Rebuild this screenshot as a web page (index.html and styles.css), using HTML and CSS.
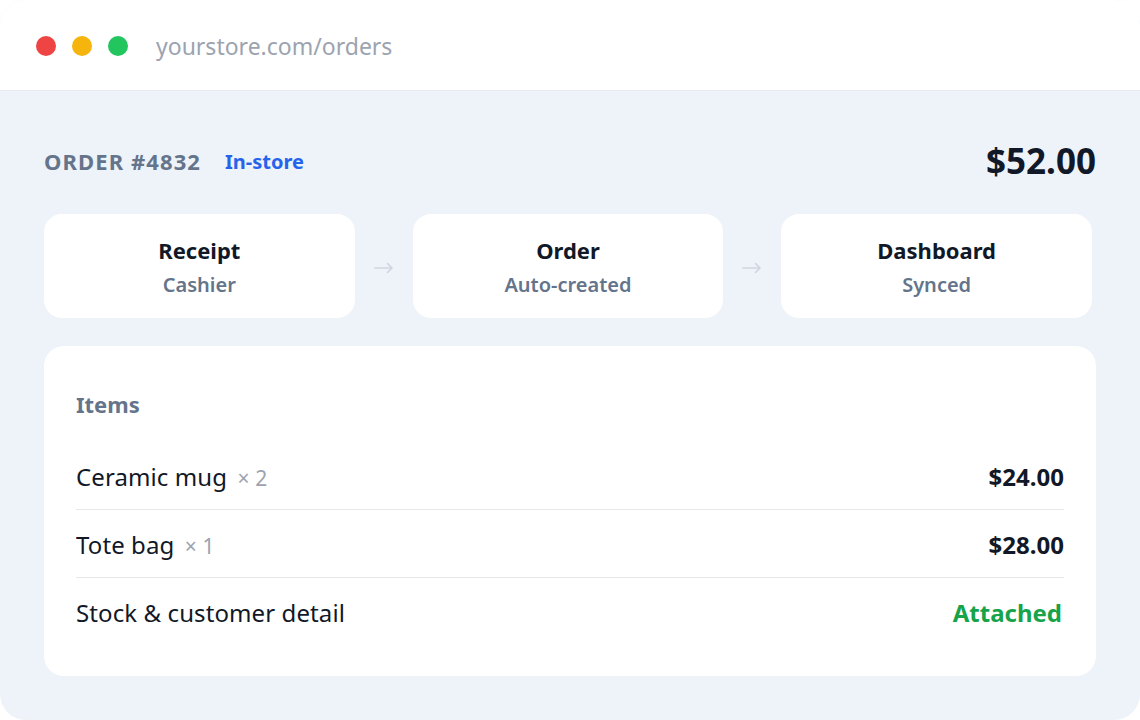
FILE: index.html
```html
<!DOCTYPE html>
<html lang="en">
<head>
<meta charset="utf-8">
<title>Order #4832</title>
<link rel="stylesheet" href="styles.css">
</head>
<body>
<div class="window">
  <div class="titlebar">
    <div class="dots">
      <span class="dot dot-red"></span>
      <span class="dot dot-yellow"></span>
      <span class="dot dot-green"></span>
    </div>
    <div class="url">yourstore.com/orders</div>
  </div>
  <div class="content">
    <div class="order-head">
      <div class="order-id">ORDER #4832</div>
      <div class="order-tag">In-store</div>
      <div class="order-total">$52.00</div>
    </div>
    <div class="steps">
      <div class="step">
        <div class="step-title">Receipt</div>
        <div class="step-sub">Cashier</div>
      </div>
      <div class="arrow"><svg width="20" height="12" viewBox="0 0 20 12"><path d="M1 6H18M13.5 1.5L18 6L13.5 10.5" fill="none" stroke="#cfd6e0" stroke-width="1.6" stroke-linecap="round" stroke-linejoin="round"/></svg></div>
      <div class="step">
        <div class="step-title">Order</div>
        <div class="step-sub">Auto-created</div>
      </div>
      <div class="arrow"><svg width="20" height="12" viewBox="0 0 20 12"><path d="M1 6H18M13.5 1.5L18 6L13.5 10.5" fill="none" stroke="#cfd6e0" stroke-width="1.6" stroke-linecap="round" stroke-linejoin="round"/></svg></div>
      <div class="step">
        <div class="step-title">Dashboard</div>
        <div class="step-sub">Synced</div>
      </div>
    </div>
    <div class="items">
      <div class="items-title">Items</div>
      <div class="row">
        <div class="row-name">Ceramic mug <span class="qty">× 2</span></div>
        <div class="row-value">$24.00</div>
      </div>
      <div class="row">
        <div class="row-name">Tote bag <span class="qty">× 1</span></div>
        <div class="row-value">$28.00</div>
      </div>
      <div class="row">
        <div class="row-name">Stock &amp; customer detail</div>
        <div class="row-value ok">Attached</div>
      </div>
    </div>
  </div>
</div>
</body>
</html>
```
FILE: styles.css
```css
* { box-sizing: border-box; }
html, body { margin: 0; padding: 0; background: #ffffff; }
body { font-family: "Noto Sans", "Open Sans", sans-serif; color: #111827; }

.window {
  width: 1140px;
  height: 720px;
  border-radius: 26px;
  overflow: hidden;
  background: #eef2f9;
}

.titlebar {
  height: 91px;
  background: #ffffff;
  border-bottom: 1px solid #e6e9ef;
  display: flex;
  align-items: center;
  padding-left: 36px;
  padding-top: 2px;
}
.dots { display: flex; gap: 16px; }
.dot { width: 20px; height: 20px; border-radius: 50%; display: block; }
.dot-red { background: #ef4444; }
.dot-yellow { background: #f5b50c; }
.dot-green { background: #22c55e; }
.url {
  margin-left: 28px;
  font-size: 23px;
  color: #9ca3af;
  line-height: 30px;
}

.content { padding: 50px 44px 0 44px; }

.order-head {
  display: flex;
  align-items: center;
  height: 40px;
}
.order-id {
  font-size: 22px;
  font-weight: 700;
  color: #64748b;
  letter-spacing: 1.1px;
}
.order-tag {
  margin-left: 24px;
  font-size: 20px;
  font-weight: 700;
  color: #2563eb;
}
.order-total {
  margin-left: auto;
  font-size: 35px;
  font-weight: 700;
  color: #111827;
  line-height: 40px;
}

.steps {
  margin-top: 33px;
  margin-right: 4px;
  display: grid;
  grid-template-columns: 1fr 58px 1fr 58px 1fr;
  align-items: center;
}
.step {
  background: #ffffff;
  border-radius: 18px;
  height: 104px;
  padding: 21px 12px 0;
  text-align: center;
}
.step-title {
  font-size: 22px;
  font-weight: 700;
  line-height: 30px;
  color: #111827;
}
.step-sub {
  margin-top: 7px;
  font-size: 20px;
  font-weight: 600;
  line-height: 26px;
  color: #64748b;
}
.arrow {
  display: flex;
  justify-content: center;
  padding-top: 4px;
}
.arrow svg { display: block; }

.items {
  margin-top: 28px;
  background: #ffffff;
  border-radius: 20px;
  padding: 44px 32px 30px;
}
.items-title {
  font-size: 22px;
  font-weight: 700;
  line-height: 28px;
  color: #64748b;
  margin-bottom: 24px;
}
.row {
  display: flex;
  align-items: center;
  justify-content: space-between;
  height: 68px;
  padding-top: 2px;
  border-bottom: 1px solid #e5e7eb;
}
.row:last-child { border-bottom: none; }
.row-name { font-size: 24px; line-height: 30px; color: #111827; letter-spacing: 0.1px; }
.qty { font-size: 21px; line-height: 20px; color: #9ca3af; margin-left: 4px; }
.row-value { font-size: 24px; line-height: 30px; font-weight: 700; color: #111827; }
.row-value.ok { color: #16a34a; margin-right: 2px; }
```
